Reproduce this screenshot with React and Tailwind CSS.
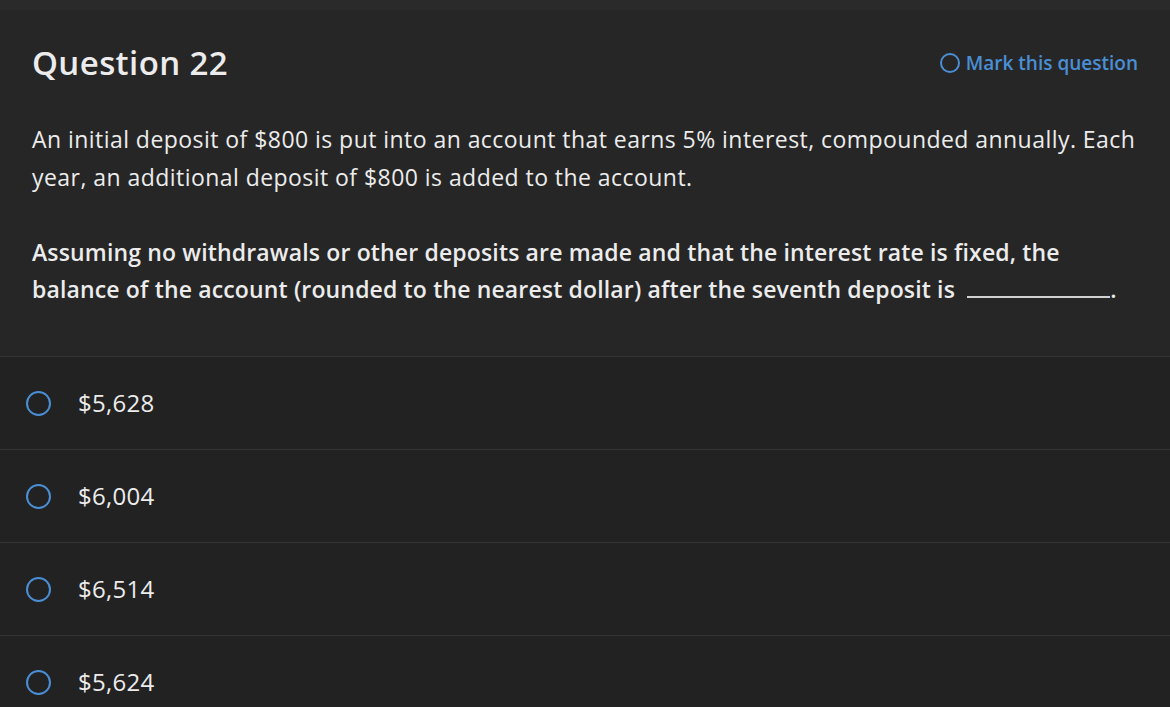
import React from 'react';

const options = ['$5,628', '$6,004', '$6,514', '$5,624'];

const Radio = ({ size }) => (
    <span
        className={`${size} shrink-0 rounded-full border-[2.5px] border-[#4a8fd6]`}
    />
);

const App = () => {
    return (
        <div
            className="w-[1170px] h-[707px] overflow-hidden bg-[#222222] text-[#ececec]"
            style={{ fontFamily: '"Open Sans", Lato, sans-serif' }}
        >
            <div className="h-[10px] bg-[#2a2a2a]" />
            <div className="bg-[#262626] px-8 pb-[48px] border-b border-[#333333]">
                <div className="flex items-center justify-between pt-[31px]">
                    <h1 className="text-[33px] font-semibold leading-[44px] tracking-[0.4px]">Question 22</h1>
                    <button className="flex items-center gap-[6px] text-[19px] font-semibold text-[#4a8fd6]">
                        <span className="w-[20px] h-[20px] rounded-full border-2 border-[#4a8fd6]" />
                        Mark this question
                    </button>
                </div>
                <p className="mt-[35px] text-[23px] leading-[38px] tracking-[0.45px]">
                    An initial deposit of $800 is put into an account that earns 5% interest, compounded annually. Each year, an additional deposit of $800 is added to the account.
                </p>
                <p className="mt-[38px] text-[23px] font-semibold leading-[37px] tracking-[0.15px]">
                    Assuming no withdrawals or other deposits are made and that the interest rate is fixed, the balance of the account (rounded to the nearest dollar) after the seventh deposit{' '}
                    <span className="whitespace-nowrap">
                        is{' '}
                        <span className="inline-block w-[143px] ml-[6px] border-b-2 border-[#d0d0d0] align-baseline" />.
                    </span>
                </p>
            </div>
            {options.map((opt) => (
                <div
                    key={opt}
                    className="flex items-center h-[93px] border-b border-[#333333] pl-[26px]"
                >
                    <Radio size="w-[25px] h-[25px]" />
                    <span className="ml-[27px] text-[24px] tracking-[0.3px]">{opt}</span>
                </div>
            ))}
        </div>
    );
};

export default App;
